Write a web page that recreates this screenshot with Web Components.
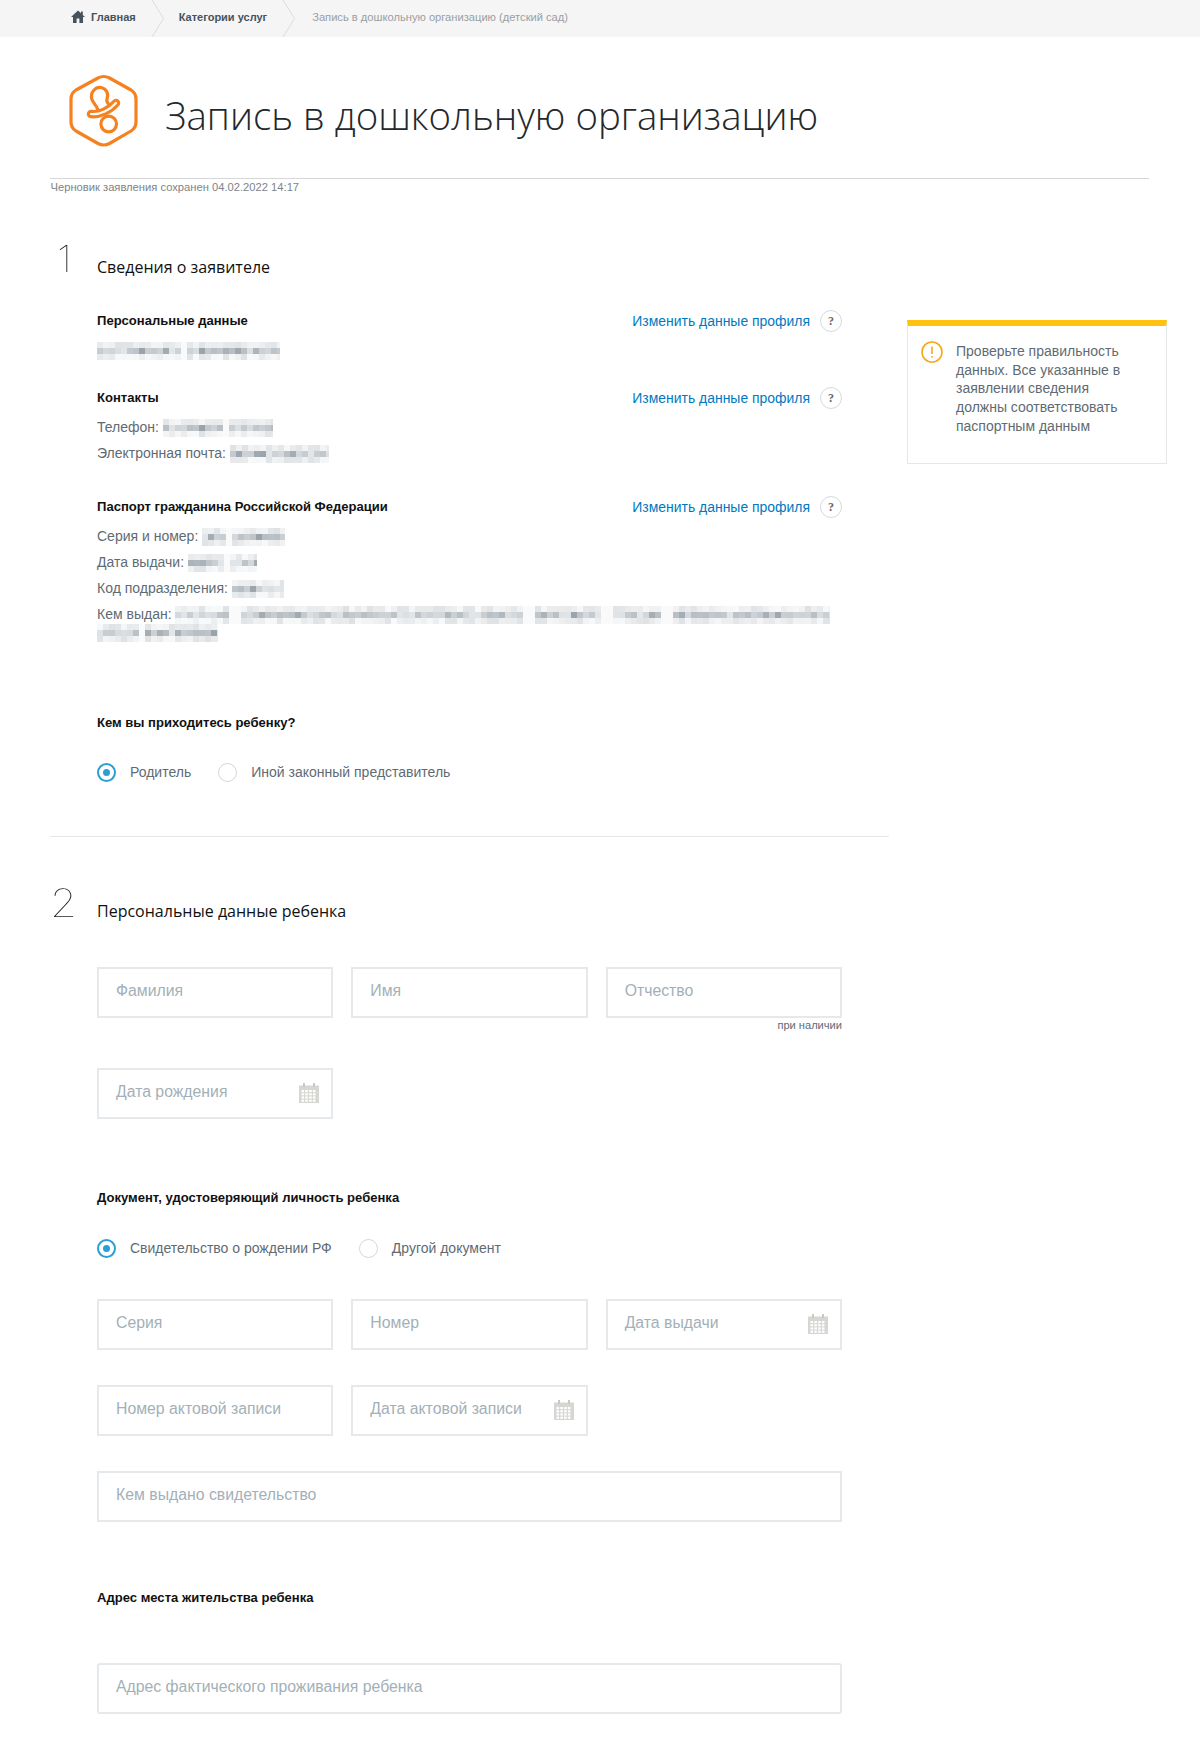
<!DOCTYPE html>
<html lang="ru">
<head>
<meta charset="utf-8">
<title>Запись в дошкольную организацию</title>
<style>
  body { margin: 0; background: white; font-family: "Liberation Sans", Arial, sans-serif; color: #5f6b73; }
</style>
</head>
<body>
<app-page>
  <app-breadcrumb slot="top"></app-breadcrumb>
  <page-header slot="top">Запись в дошкольную организацию</page-header>

  <form-section num="1" heading="Сведения о заявителе" style="height: 642px; --num-x: 7px; --num-size: 36px; --num-up: 4px; --title-up: 4px; --head-gap: 28px">
    <data-block heading="Персональные данные" link>
      <div><mosaic-text w="183" seed="3" gaps="86"></mosaic-text></div>
    </data-block>
    <data-block heading="Контакты" link style="margin-top: 23px">
      <div>Телефон: <mosaic-text w="110" seed="7" gaps="62"></mosaic-text></div>
      <div>Электронная почта: <mosaic-text w="99" seed="11"></mosaic-text></div>
    </data-block>
    <data-block heading="Паспорт гражданина Российской Федерации" link style="margin-top: 29px">
      <div>Серия и номер: <mosaic-text w="83" seed="13" gaps="24"></mosaic-text></div>
      <div>Дата выдачи: <mosaic-text w="69" seed="17" gaps="36"></mosaic-text></div>
      <div>Код подразделения: <mosaic-text w="52" seed="19"></mosaic-text></div>
      <div>Кем выдан: <mosaic-text w="655" seed="23" gaps="58,352,430,490"></mosaic-text></div>
      <mosaic-text block w="121" seed="29" gaps="42"></mosaic-text>
    </data-block>
    <sub-heading style="margin-top: 71px">Кем вы приходитесь ребенку?</sub-heading>
    <radio-row style="margin-top: 29px">
      <radio-item checked>Родитель</radio-item>
      <radio-item>Иной законный представитель</radio-item>
    </radio-row>
  </form-section>

  <form-section num="2" heading="Персональные данные ребенка" last style="--num-x: 0px; --num-size: 39px; --num-up: 2px; --title-up: 2px; --head-gap: 44px">
    <field-row>
      <text-field>Фамилия</text-field>
      <text-field>Имя</text-field>
      <text-field>Отчество</text-field>
    </field-row>
    <field-hint>при наличии</field-hint>
    <field-row style="margin-top: 36px">
      <text-field calendar>Дата рождения</text-field>
    </field-row>
    <sub-heading style="margin-top: 69px">Документ, удостоверяющий личность ребенка</sub-heading>
    <radio-row style="margin-top: 30px">
      <radio-item checked>Свидетельство о рождении РФ</radio-item>
      <radio-item>Другой документ</radio-item>
    </radio-row>
    <field-row style="margin-top: 41px">
      <text-field>Серия</text-field>
      <text-field>Номер</text-field>
      <text-field calendar>Дата выдачи</text-field>
    </field-row>
    <field-row style="margin-top: 35px">
      <text-field>Номер актовой записи</text-field>
      <text-field calendar>Дата актовой записи</text-field>
    </field-row>
    <field-row wide style="margin-top: 35px">
      <text-field>Кем выдано свидетельство</text-field>
    </field-row>
    <sub-heading style="margin-top: 66px">Адрес места жительства ребенка</sub-heading>
    <field-row wide style="margin-top: 55px">
      <text-field rounded>Адрес фактического проживания ребенка</text-field>
    </field-row>
  </form-section>

  <notice-card slot="aside">Проверьте правильность данных. Все указанные в заявлении сведения должны соответствовать паспортным данным</notice-card>
</app-page>

<script>
class AppPage extends HTMLElement {
  connectedCallback() {
    this.attachShadow({ mode: 'open' });
    this.shadowRoot.innerHTML = `
      <style>
        :host { display: block; width: 1200px; min-height: 1754px; }
        .body { display: flex; gap: 18px; padding-left: 50px; }
        .main { width: 839px; }
        .aside { width: 260px; padding-top: 125px; }
      </style>
      <slot name="top"></slot>
      <div class="body">
        <div class="main"><slot></slot></div>
        <div class="aside"><slot name="aside"></slot></div>
      </div>
    `;
  }
}

class AppBreadcrumb extends HTMLElement {
  connectedCallback() {
    this.attachShadow({ mode: 'open' });
    const sep = `<svg class="sep" width="14" height="37" viewBox="0 0 14 37" fill="none"><path d="M1 0L12.5 18.5L1 37" stroke="#dcdcdc"/></svg>`;
    this.shadowRoot.innerHTML = `
      <style>
        :host { display: flex; align-items: center; height: 37px; background: #f5f5f5; padding-left: 71px; font-size: 11px; }
        a, span { position: relative; top: -2px; }
        a { font-weight: 700; color: #46535c; text-decoration: none; display: inline-flex; align-items: center; }
        svg.home { margin-right: 6px; }
        .sep { margin: 0 14px 0 15px; }
        .sep.last { margin: 0 16px 0 15px; }
        .cur { color: #9a9fa3; font-size: 11.15px; }
      </style>
      <a href="#"><svg class="home" width="14" height="13" viewBox="0 0 14 13"><path d="M7 .5L0 7h2v6h3.6V8.6h2.8V13H12V7h2l-2.2-2V1.4H10v1.9z" fill="#46535c"/></svg>Главная</a>
      ${sep}
      <a href="#">Категории услуг</a>
      ${sep.replace('class="sep"', 'class="sep last"')}
      <span class="cur">Запись в дошкольную организацию (детский сад)</span>
    `;
  }
}

class PageHeader extends HTMLElement {
  connectedCallback() {
    this.attachShadow({ mode: 'open' });
    this.shadowRoot.innerHTML = `
      <style>
        :host { display: block; margin: 0 51px 0 50px; }
        .top { display: flex; align-items: center; border-bottom: 1px solid #d5d7d8; padding-left: 17.5px; box-sizing: border-box; height: 142px; }
        h1 { margin: 14px 0 0 25.5px; font: 300 38.4px "Open Sans", sans-serif; color: #23282c; white-space: nowrap; }
        .draft { font-size: 11.2px; line-height: 16px; color: #7d8488; padding-left: .5px; }
        svg { display: block; margin-top: 6px; }
      </style>
      <div class="top">
        <svg width="72" height="78" viewBox="0 0 72 78" fill="none" stroke="#f5811f" stroke-width="3.2" stroke-linecap="round" stroke-linejoin="round">
          <path d="M30 6Q35.7 3 41.5 6L63 18Q68 21 68 27L68 50Q68 56 63 59L41.5 71.5Q35.7 74.5 30 71.5L8 59Q3 56 3 50L3 27Q3 21 8 18Z"/>
          <path d="M30 38C29 34 25 31 23.8 27C22 20 28 14.5 33 15.5C38.5 16.5 41 22 39 27C38 30 40 32 43 34"/>
          <circle cx="40.7" cy="52" r="7.8"/>
          <path d="M23 42C32 43 42 38 48 31" stroke-width="8.5"/>
          <path d="M23 42C32 43 42 38 48 31" stroke="#fff" stroke-width="2.2"/>
        </svg>
        <h1><slot></slot></h1>
      </div>
      <div class="draft">Черновик заявления сохранен 04.02.2022 14:17</div>
    `;
  }
}

class FormSection extends HTMLElement {
  connectedCallback() {
    this.attachShadow({ mode: 'open' });
    this.shadowRoot.innerHTML = `
      <style>
        :host { display: block; box-sizing: border-box; padding-top: 50px; ${this.hasAttribute('last') ? '' : 'border-bottom: 1px solid #e4e6e8;'} }
        .head { display: flex; align-items: flex-end; height: 36px; margin-bottom: var(--head-gap); }
        .slot-num { width: 47px; flex: none; padding: 0 0 var(--num-up) var(--num-x); box-sizing: border-box; }
        .num { display: inline-block; font: 100 var(--num-size)/36px Inter, "Open Sans", sans-serif; color: #1b1f22; transform: scaleX(1.12); transform-origin: left; will-change: transform; }
        h2 { margin: 0 0 var(--title-up); font: 400 16px/20px "Open Sans", sans-serif; color: #111; }
        .content { padding-left: 47px; }
      </style>
      <div class="head"><div class="slot-num"><span class="num">${this.getAttribute('num')}</span></div><h2>${this.getAttribute('heading')}</h2></div>
      <div class="content"><slot></slot></div>
    `;
  }
}

class DataBlock extends HTMLElement {
  connectedCallback() {
    this.attachShadow({ mode: 'open' });
    this.shadowRoot.innerHTML = `
      <style>
        :host { display: block; width: 745px; font-size: 14px; line-height: 26px; color: #5f6b73; }
        .head { display: flex; align-items: center; height: 24px; margin-bottom: 4px; }
        b { flex: 1; font-size: 13.05px; color: #111; }
        a { font-size: 13.95px; color: #0079c1; text-decoration: none; margin-right: 10px; }
        .q { width: 20px; height: 20px; border: 1px solid #d5dade; border-radius: 50%; text-align: center; font: 700 12px/20px "Liberation Serif", serif; color: #5f686e; }
      </style>
      <div class="head"><b>${this.getAttribute('heading')}</b><a href="#">Изменить данные профиля</a><span class="q">?</span></div>
      <slot></slot>
    `;
  }
}

// pixelated stand-in for the redacted personal data
class MosaicText extends HTMLElement {
  connectedCallback() {
    this.attachShadow({ mode: 'open' });
    const w = +this.getAttribute('w');
    const gaps = (this.getAttribute('gaps') || '').split(',').filter(Boolean).map(Number);
    let s = +this.getAttribute('seed') * 7919 + 17;
    const rnd = () => { s = (s * 1664525 + 1013904223) % 4294967296; return s / 4294967296; };
    let rects = '';
    for (let x = 0; x < w; x += 6) {
      const gap = gaps.some(g => x + 6 > g && x < g + 3);
      for (let r = 0; r < 3; r++) {
        const dark = rnd() > 0.8 ? 0.25 : 0;
        const a = gap ? 0.04 : (r === 1 ? 0.2 + rnd() * 0.35 + dark : 0.05 + rnd() * 0.2);
        rects += `<rect x="${x}" y="${r * 6}" width="6" height="6" fill="#7d8a94" opacity="${a.toFixed(2)}"/>`;
      }
    }
    this.shadowRoot.innerHTML = `
      <style>
        :host { display: ${this.hasAttribute('block') ? 'block' : 'inline-block'}; vertical-align: middle; line-height: 0; ${this.hasAttribute('block') ? 'margin-top: -3px;' : ''} }
        svg { filter: blur(.7px); }
      </style>
      <svg width="${w}" height="18">${rects}</svg>
    `;
  }
}

class SubHeading extends HTMLElement {
  connectedCallback() {
    this.attachShadow({ mode: 'open' });
    this.shadowRoot.innerHTML = `
      <style>
        :host { display: block; font-size: 13.05px; line-height: 20px; font-weight: 700; color: #111; }
      </style>
      <slot></slot>
    `;
  }
}

class RadioRow extends HTMLElement {
  connectedCallback() {
    this.attachShadow({ mode: 'open' });
    this.shadowRoot.innerHTML = `
      <style>
        :host { display: flex; gap: 27px; }
      </style>
      <slot></slot>
    `;
  }
}

class RadioItem extends HTMLElement {
  connectedCallback() {
    this.attachShadow({ mode: 'open' });
    const on = this.hasAttribute('checked');
    this.shadowRoot.innerHTML = `
      <style>
        :host { display: inline-flex; align-items: center; gap: 14px; height: 20px; font-size: 14px; color: #5f6b73; }
        .dot { width: 19px; height: 19px; box-sizing: border-box; border-radius: 50%; border: ${on ? '2px solid #2b9fd4' : '1px solid #d3d8db'}; display: flex; align-items: center; justify-content: center; }
        .dot i { width: 7px; height: 7px; border-radius: 50%; background: #2b9fd4; }
      </style>
      <span class="dot">${on ? '<i></i>' : ''}</span><slot></slot>
    `;
  }
}

class FieldRow extends HTMLElement {
  connectedCallback() {
    this.attachShadow({ mode: 'open' });
    this.shadowRoot.innerHTML = `
      <style>
        :host { display: grid; width: 745px; gap: 18px; grid-template-columns: ${this.hasAttribute('wide') ? '1fr' : 'repeat(3, 1fr)'}; }
      </style>
      <slot></slot>
    `;
  }
}

class FieldHint extends HTMLElement {
  connectedCallback() {
    this.attachShadow({ mode: 'open' });
    this.shadowRoot.innerHTML = `
      <style>
        :host { display: block; width: 745px; text-align: right; font-size: 11.1px; line-height: 14px; color: #5f6b73; }
      </style>
      <slot></slot>
    `;
  }
}

class TextField extends HTMLElement {
  connectedCallback() {
    this.attachShadow({ mode: 'open' });
    let cells = '';
    for (let y = 7; y < 19; y += 3.2) {
      for (let x = 2.5; x < 17; x += 3.8) cells += `<rect x="${x}" y="${y}" width="2.6" height="2.2" fill="#fff"/>`;
    }
    const cal = this.hasAttribute('calendar') ? `<svg width="20" height="20" viewBox="0 0 20 20"><path d="M0 2.5h20V20H0z" fill="#d6d6d2"/><path d="M4 0h2v4H4zM14 0h2v4h-2z" fill="#c8c8c4"/>${cells}</svg>` : '';
    this.shadowRoot.innerHTML = `
      <style>
        :host { display: flex; align-items: center; justify-content: space-between; box-sizing: border-box; height: 51px; padding: 0 12px 2px 17px; border: 2px solid #e6e9eb; border-radius: ${this.hasAttribute('rounded') ? '3px' : '0'}; font-size: 15.8px; color: #a3b0b7; background: white; }
        svg { flex: none; }
        span { position: relative; top: -1px; }
      </style>
      <span><slot></slot></span>${cal}
    `;
  }
}

class NoticeCard extends HTMLElement {
  connectedCallback() {
    this.attachShadow({ mode: 'open' });
    this.shadowRoot.innerHTML = `
      <style>
        :host { display: flex; box-sizing: border-box; width: 260px; height: 144px; padding: 16px 28px 0 14px; gap: 12px; border: 1px solid #e4e8eb; border-top: 6px solid #ffc20e; font-size: 14px; line-height: 18.7px; color: #5f6b73; }
        svg { flex: none; margin: -1px 1px 0 -1px; }
      </style>
      <svg width="22" height="22" viewBox="0 0 22 22" fill="none"><circle cx="11" cy="11" r="10" stroke="#f5a81c" stroke-width="1.6"/><path d="M11 5.5v7.5M11 15v1.6" stroke="#f5a81c" stroke-width="1.6"/></svg>
      <div><slot></slot></div>
    `;
  }
}

customElements.define('app-page', AppPage);
customElements.define('app-breadcrumb', AppBreadcrumb);
customElements.define('page-header', PageHeader);
customElements.define('form-section', FormSection);
customElements.define('data-block', DataBlock);
customElements.define('mosaic-text', MosaicText);
customElements.define('sub-heading', SubHeading);
customElements.define('radio-row', RadioRow);
customElements.define('radio-item', RadioItem);
customElements.define('field-row', FieldRow);
customElements.define('field-hint', FieldHint);
customElements.define('text-field', TextField);
customElements.define('notice-card', NoticeCard);
</script>
</body>
</html>
